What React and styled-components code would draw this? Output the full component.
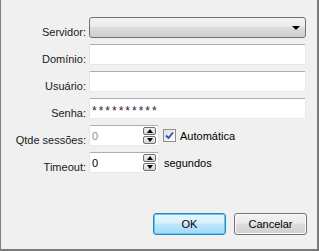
import React from 'react'
import styled, { createGlobalStyle } from 'styled-components'

const GlobalStyle = createGlobalStyle`
  html, body { margin: 0; padding: 0; background: #f0f0f0; }
  body { font-family: "Liberation Sans", Arial, sans-serif; font-size: 11px; color: #000; }
`

function App() {
  return (
    <>
      <GlobalStyle />
      <Window>
        <Form>
          <Label>Servidor:</Label>
          <Combo>
            <ComboArrow />
          </Combo>

          <Label>Domínio:</Label>
          <TextBox />

          <Label>Usuário:</Label>
          <TextBox />

          <Label>Senha:</Label>
          <TextBox>
            <Masked>**********</Masked>
          </TextBox>

          <Label>Qtde sessões:</Label>
          <InlineRow>
            <Spin>
              <SpinValue disabled>0</SpinValue>
              <SpinButtons>
                <SpinButton><ArrowUp /></SpinButton>
                <SpinButton><ArrowDown /></SpinButton>
              </SpinButtons>
            </Spin>
            <CheckLabel>
              <CheckBox>
                <svg width="9" height="9" viewBox="0 0 9 9">
                  <path d="M1 4.5 L3.5 7 L8 1.5" fill="none" stroke="#2a4fa8" strokeWidth="1.8" />
                </svg>
              </CheckBox>
              Automática
            </CheckLabel>
          </InlineRow>

          <Label>Timeout:</Label>
          <InlineRow>
            <Spin>
              <SpinValue>0</SpinValue>
              <SpinButtons>
                <SpinButton><ArrowUp /></SpinButton>
                <SpinButton><ArrowDown /></SpinButton>
              </SpinButtons>
            </Spin>
            <Suffix>segundos</Suffix>
          </InlineRow>
        </Form>

        <Buttons>
          <Button primary>OK</Button>
          <Button>Cancelar</Button>
        </Buttons>
      </Window>
    </>
  )
}

export default App

const Window = styled.div`
width:319px;
height:251px;
box-sizing:border-box;
background:#f0f0f0;
border-left:1px solid #808080;
border-right:2px solid #7a7a7a;
border-bottom:2px solid #7a7a7a;
display:flex;
flex-direction:column;
padding:17px 10px 0 0;
`
const Form = styled.div`
display:grid;
grid-template-columns:85px 217px;
column-gap:3px;
row-gap:6px;
grid-auto-rows:21px;
`
const Label = styled.div`
align-self:end;
text-align:right;
line-height:13px;
margin-bottom:-1px;
white-space:nowrap;
color:#1a1a1a;
`
const Combo = styled.div`
box-sizing:border-box;
height:21px;
border:1px solid #707070;
border-radius:3px;
background:linear-gradient(#f2f2f2 0%, #ebebeb 45%, #dddddd 50%, #cfcfcf 100%);
display:flex;
align-items:center;
justify-content:flex-end;
padding-right:5px;
`
const ComboArrow = styled.div`
width:0;
height:0;
border-left:4px solid transparent;
border-right:4px solid transparent;
border-top:4px solid #000;
margin-top:1px;
`
const TextBox = styled.div`
box-sizing:border-box;
height:21px;
background:#fff;
border:1px solid #e3e9ef;
border-top-color:#abadb3;
border-left-color:#e2e3ea;
border-radius:2px;
display:flex;
align-items:center;
padding-left:2px;
`
const Masked = styled.span`
color:#3a1535;
font-size:12px;
letter-spacing:2px;
padding-top:4px;
`
const InlineRow = styled.div`
display:flex;
align-items:center;
gap:5px;
`
const Spin = styled.div`
box-sizing:border-box;
width:70px;
height:21px;
background:#fff;
border:1px solid #e3e9ef;
border-top-color:#abadb3;
border-left-color:#e2e3ea;
border-radius:2px;
display:flex;
align-items:center;
justify-content:space-between;
padding:0 2px 0 2px;
`
const SpinValue = styled.span`
color:${p => (p.disabled ? '#8d8d8d' : '#000')};
`
const SpinButtons = styled.div`
display:flex;
flex-direction:column;
gap:1px;
`
const SpinButton = styled.div`
box-sizing:border-box;
width:13px;
height:8px;
border:1px solid #707070;
border-radius:2px;
background:linear-gradient(#f2f2f2, #d4d4d4);
display:flex;
align-items:center;
justify-content:center;
`
const ArrowUp = styled.div`
width:0;
height:0;
border-left:3.5px solid transparent;
border-right:3.5px solid transparent;
border-bottom:4px solid #000;
`
const ArrowDown = styled.div`
width:0;
height:0;
border-left:3.5px solid transparent;
border-right:3.5px solid transparent;
border-top:4px solid #000;
`
const CheckLabel = styled.label`
display:flex;
align-items:center;
gap:4px;
margin-left:-1px;
`
const CheckBox = styled.div`
box-sizing:border-box;
width:13px;
height:13px;
border:1px solid #8e8f8f;
background:linear-gradient(135deg, #dcdcdc, #ffffff);
display:flex;
align-items:center;
justify-content:center;
`
const Suffix = styled.span`
margin-left:0;
`
const Buttons = styled.div`
margin-top:auto;
margin-bottom:14px;
display:flex;
justify-content:flex-end;
gap:8px;
`
const Button = styled.div`
box-sizing:border-box;
width:73px;
height:22px;
border:1px solid ${p => (p.primary ? '#3c7fb1' : '#707070')};
border-radius:3px;
background:${p => (p.primary
  ? 'linear-gradient(#eaf6fd 0%, #d9f0fc 45%, #bee6fd 50%, #a7d9f5 100%)'
  : 'linear-gradient(#f2f2f2 0%, #ebebeb 45%, #dddddd 50%, #cfcfcf 100%)')};
box-shadow:${p => (p.primary ? 'inset 0 0 0 1px #48d1f9' : 'inset 0 0 0 1px #fcfcfc')};
display:flex;
align-items:center;
justify-content:center;
`
